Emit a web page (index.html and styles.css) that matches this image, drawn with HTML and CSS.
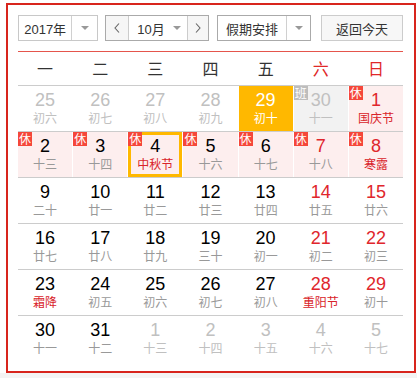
FILE: index.html
```html
<!DOCTYPE html>
<html lang="zh-CN">
<head>
<meta charset="utf-8">
<title>万年历</title>
<link rel="stylesheet" href="styles.css">
</head>
<body>
<div class="cal">
  <div class="toolbar">
    <div class="sel sel-year">
      <span class="sel-text">2017年</span>
      <span class="sel-arrow"><i class="tri"></i></span>
    </div>
    <div class="sel sel-month">
      <span class="nav nav-prev"><svg width="6" height="10" viewBox="0 0 6 10"><polyline points="5,0.5 1,5 5,9.5" fill="none" stroke="#666" stroke-width="1.1"/></svg></span>
      <span class="month-mid"><span>10月</span><i class="tri"></i></span>
      <span class="nav nav-next"><svg width="6" height="10" viewBox="0 0 6 10"><polyline points="1,0.5 5,5 1,9.5" fill="none" stroke="#666" stroke-width="1.1"/></svg></span>
    </div>
    <div class="sel sel-holiday">
      <span class="sel-text">假期安排</span>
      <span class="sel-arrow"><i class="tri"></i></span>
    </div>
    <div class="btn-today">返回今天</div>
  </div>

  <div class="weekhead">
    <span>一</span><span>二</span><span>三</span><span>四</span><span>五</span><span class="wkend">六</span><span class="wkend">日</span>
  </div>

  <div class="week">
    <div class="day other"><div class="num">25</div><div class="lunar">初六</div></div>
    <div class="day other"><div class="num">26</div><div class="lunar">初七</div></div>
    <div class="day other"><div class="num">27</div><div class="lunar">初八</div></div>
    <div class="day other"><div class="num">28</div><div class="lunar">初九</div></div>
    <div class="day selected"><div class="num">29</div><div class="lunar">初十</div></div>
    <div class="day other work"><span class="badge badge-work">班</span><div class="num">30</div><div class="lunar">十一</div></div>
    <div class="day rest red"><span class="badge">休</span><div class="num">1</div><div class="lunar fest">国庆节</div></div>
  </div>

  <div class="week">
    <div class="day rest"><span class="badge">休</span><div class="num">2</div><div class="lunar">十三</div></div>
    <div class="day rest"><span class="badge">休</span><div class="num">3</div><div class="lunar">十四</div></div>
    <div class="day rest today"><span class="badge">休</span><div class="num">4</div><div class="lunar fest">中秋节</div></div>
    <div class="day rest"><span class="badge">休</span><div class="num">5</div><div class="lunar">十六</div></div>
    <div class="day rest"><span class="badge">休</span><div class="num">6</div><div class="lunar">十七</div></div>
    <div class="day rest red"><span class="badge">休</span><div class="num">7</div><div class="lunar">十八</div></div>
    <div class="day rest red"><span class="badge">休</span><div class="num">8</div><div class="lunar fest">寒露</div></div>
  </div>

  <div class="week">
    <div class="day"><div class="num">9</div><div class="lunar">二十</div></div>
    <div class="day"><div class="num">10</div><div class="lunar">廿一</div></div>
    <div class="day"><div class="num">11</div><div class="lunar">廿二</div></div>
    <div class="day"><div class="num">12</div><div class="lunar">廿三</div></div>
    <div class="day"><div class="num">13</div><div class="lunar">廿四</div></div>
    <div class="day red"><div class="num">14</div><div class="lunar">廿五</div></div>
    <div class="day red"><div class="num">15</div><div class="lunar">廿六</div></div>
  </div>

  <div class="week">
    <div class="day"><div class="num">16</div><div class="lunar">廿七</div></div>
    <div class="day"><div class="num">17</div><div class="lunar">廿八</div></div>
    <div class="day"><div class="num">18</div><div class="lunar">廿九</div></div>
    <div class="day"><div class="num">19</div><div class="lunar">三十</div></div>
    <div class="day"><div class="num">20</div><div class="lunar">初一</div></div>
    <div class="day red"><div class="num">21</div><div class="lunar">初二</div></div>
    <div class="day red"><div class="num">22</div><div class="lunar">初三</div></div>
  </div>

  <div class="week">
    <div class="day"><div class="num">23</div><div class="lunar fest">霜降</div></div>
    <div class="day"><div class="num">24</div><div class="lunar">初五</div></div>
    <div class="day"><div class="num">25</div><div class="lunar">初六</div></div>
    <div class="day"><div class="num">26</div><div class="lunar">初七</div></div>
    <div class="day"><div class="num">27</div><div class="lunar">初八</div></div>
    <div class="day red"><div class="num">28</div><div class="lunar fest">重阳节</div></div>
    <div class="day red"><div class="num">29</div><div class="lunar">初十</div></div>
  </div>

  <div class="week">
    <div class="day"><div class="num">30</div><div class="lunar">十一</div></div>
    <div class="day"><div class="num">31</div><div class="lunar">十二</div></div>
    <div class="day other"><div class="num">1</div><div class="lunar">十三</div></div>
    <div class="day other"><div class="num">2</div><div class="lunar">十四</div></div>
    <div class="day other"><div class="num">3</div><div class="lunar">十五</div></div>
    <div class="day other"><div class="num">4</div><div class="lunar">十六</div></div>
    <div class="day other"><div class="num">5</div><div class="lunar">十七</div></div>
  </div>
</div>
<div class="below"></div>
</body>
</html>
```

FILE: styles.css
```css
html, body {
  margin: 0;
  padding: 0;
  background: #fff;
}

body {
  font-family: "Liberation Sans", "Noto Sans CJK SC", sans-serif;
  color: #333;
}

.cal {
  margin: 3px 0 0 6px;
  width: 410px;
  box-sizing: border-box;
  border: 2px solid #d8251d;
  padding: 10px 11px 10px 10px;
}

.below {
  height: 12px;
  background: #f4f4f4;
}

/* toolbar */
.toolbar {
  display: flex;
  height: 26px;
  margin-bottom: 10px;
  font-size: 13px;
  color: #333;
}

.sel {
  display: flex;
  box-sizing: border-box;
  height: 26px;
  border: 1px solid #c8c8c8;
  background: #fff;
}

.sel-text {
  display: flex;
  align-items: center;
  justify-content: center;
}

.sel-arrow {
  display: flex;
  align-items: center;
  justify-content: center;
  border-left: 1px solid #d0d0d0;
}

.tri {
  display: block;
  width: 0;
  height: 0;
  border-left: 4px solid transparent;
  border-right: 4px solid transparent;
  border-top: 4px solid #999;
}

.sel-year {
  width: 80px;
}
.sel-year .sel-text {
  width: 53px;
}
.sel-year .sel-arrow {
  width: 25px;
}

.sel-month {
  width: 104px;
  margin-left: 7px;
  border-color: #aaa;
}

.nav {
  display: flex;
  align-items: center;
  justify-content: center;
  background: #f6f6f6;
  box-sizing: border-box;
}
.nav-prev {
  width: 23px;
  border-right: 1px solid #ccc;
}
.nav-next {
  width: 21px;
  border-left: 1px solid #ccc;
}

.month-mid {
  width: 58px;
  display: flex;
  align-items: center;
  justify-content: center;
  gap: 8px;
  padding-left: 2px;
  box-sizing: border-box;
}

.sel-holiday {
  width: 94px;
  margin-left: 8px;
  border-color: #aaa;
}
.sel-holiday .sel-text {
  width: 69px;
}
.sel-holiday .sel-arrow {
  width: 23px;
}

.btn-today {
  margin-left: auto;
  width: 82px;
  height: 26px;
  box-sizing: border-box;
  border: 1px solid #ccc;
  background: #f7f7f7;
  display: flex;
  align-items: center;
  justify-content: center;
}

/* week header */
.weekhead {
  display: grid;
  grid-template-columns: repeat(7, 1fr);
  column-gap: 1px;
  height: 35px;
  box-sizing: border-box;
  border-top: 1px solid #e5554c;
  border-bottom: 1px solid #ccc;
  font-family: "Noto Sans CJK SC", sans-serif;
  font-size: 16px;
  line-height: 32px;
  color: #333;
  text-align: center;
}
.weekhead .wkend {
  color: #e02828;
}

/* weeks */
.week {
  display: grid;
  grid-template-columns: repeat(7, 1fr);
  column-gap: 1px;
  height: 46px;
  box-sizing: border-box;
  border-bottom: 1px solid #ccc;
}
.week:last-child {
  height: 45px;
  border-bottom: none;
}

.day {
  position: relative;
  text-align: center;
  padding-top: 4px;
}

.num {
  font-family: "Liberation Sans", sans-serif;
  font-size: 18px;
  line-height: 20px;
  color: #000;
}

.lunar {
  font-family: "Noto Sans CJK SC", sans-serif;
  font-size: 12px;
  line-height: 16px;
  color: #999;
}

.red .num {
  color: #e0262c;
}

.fest {
  color: #d9242a;
}

.other .num,
.other .lunar {
  color: #c0c0c0;
}

.rest {
  background: #fdeeee;
}

.work {
  background: #f2f2f2;
}

.selected {
  background: #ffb800;
}
.selected .num,
.selected .lunar {
  color: #fff;
}

.today {
  box-shadow: inset 0 0 0 3px #ffb800;
}

.badge {
  position: absolute;
  top: 0;
  left: 0;
  width: 14px;
  height: 14px;
  background: #f5473a;
  color: #fff;
  font-family: "Noto Sans CJK SC", sans-serif;
  font-size: 12px;
  line-height: 14px;
  text-align: center;
}
.badge-work {
  background: #bdbdbd;
}
```
